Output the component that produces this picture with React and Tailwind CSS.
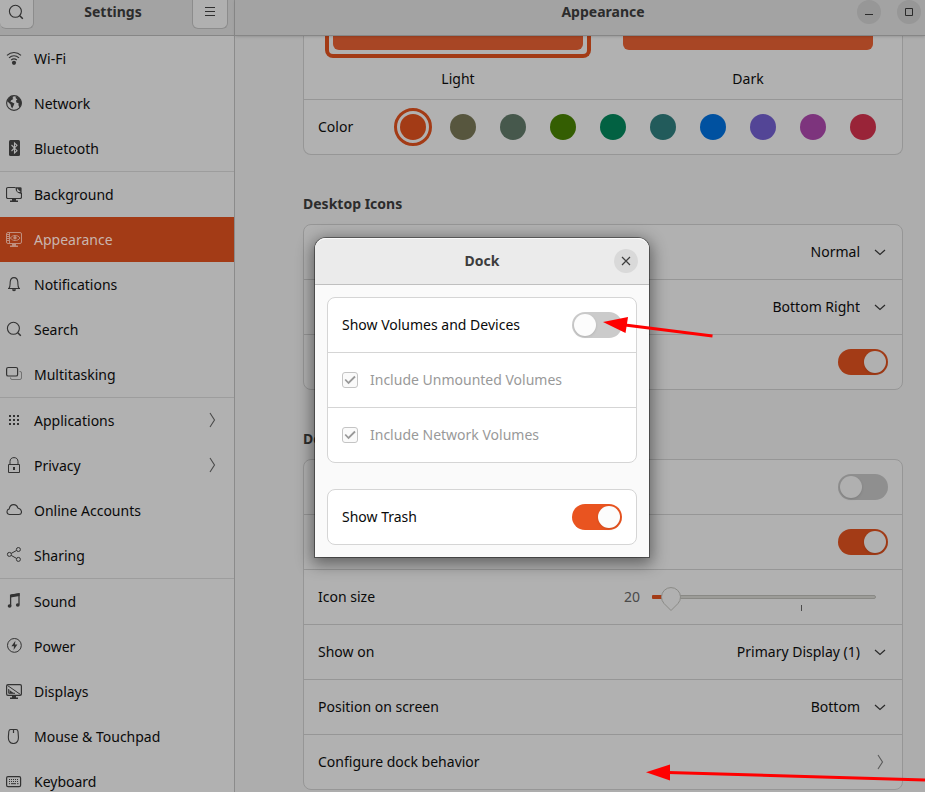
import React from "react";

const Svg = ({ children, className = "" }) => (
  <svg
    viewBox="0 0 16 16"
    width="16"
    height="16"
    fill="none"
    stroke="currentColor"
    aria-hidden="true"
    className={"shrink-0 " + className}
  >
    {children}
  </svg>
);

const icons = {
  wifi: (
    <Svg>
      <path d="M1 5.4C5 1.5 11 1.5 15 5.4" strokeWidth="1.2" />
      <path d="M3 7.9C6 5.2 10 5.2 13 7.9" strokeWidth="1.2" />
      <path d="M5.2 10C7 8.6 9 8.6 10.8 10" strokeWidth="1.2" />
      <circle cx="8" cy="12.8" r="2.1" fill="currentColor" stroke="none" />
    </Svg>
  ),
  network: (
    <Svg>
      <circle cx="8" cy="8" r="7.4" strokeWidth="1.1" />
      <path d="M1 6 3.2 2.8 6 1.1 7.6 1.6 6.4 3 7.4 4 5.2 5.2 4.4 6.4 6 7.2 8.4 8.4 7.6 10.6 6.2 13.4 5 11.6 4.6 9.4 2.6 7.6Z" fill="currentColor" stroke="none" />
      <path d="M10 1.2 13.4 3.2 15.4 6.6 15.2 10 13.4 12.6 12.4 10 12.6 8.2 10.4 7.6 10 5.6 11.4 4.4 9.6 3Z" fill="currentColor" stroke="none" />
    </Svg>
  ),
  bluetooth: (
    <Svg>
      <rect x="3" y="0" width="11" height="16" rx="1.5" fill="currentColor" stroke="none" />
      <path d="M5.5 5 11 10.7 8.5 13V3L11 5.3 5.5 11" stroke="#b1b1b1" strokeWidth="1.1" />
    </Svg>
  ),
  background: (
    <Svg>
      <path d="M9.5 1.5H2A1.5 1.5 0 0 0 .5 3v8A1.5 1.5 0 0 0 2 12.5h12a1.5 1.5 0 0 0 1.5-1.5V7" strokeWidth="1.2" />
      <path d="M9.5 1.2H14A1.5 1.5 0 0 1 15.6 3v5C13 7.6 11.4 6.5 10.6 5.6 9.8 4.4 9.6 3 9.5 1.2Z" fill="currentColor" stroke="none" />
      <path d="M11 2.2 14.6 6H12.5A1.5 1.5 0 0 1 11 4.6Z" fill="#b1b1b1" stroke="none" />
      <path d="M6 13h4v1.5h2V16H4v-1.5h2Z" fill="currentColor" stroke="none" />
    </Svg>
  ),
  appearance: (
    <Svg>
      <rect x=".5" y="1.5" width="15" height="11" rx="1.5" />
      <path d="M3.5 1.5v11M1 3.5h2.5M1 5.5h2.5M1 7.5h2.5M1 9.5h2.5" />
      <path d="M4.4 7C6.6 3.6 11.8 3.6 14 7 11.8 10.4 6.6 10.4 4.4 7Z" />
      <circle cx="9" cy="6.8" r="1.7" fill="currentColor" stroke="none" />
      <path d="M6 13h4v1.5h2V16H4v-1.5h2Z" fill="currentColor" stroke="none" />
    </Svg>
  ),
  bell: (
    <Svg>
      <path d="M2 12.5H14M3 12.3C4.4 10.6 4 8.4 4.2 6 4.4 3.2 6 1.6 8 1.6S11.6 3.2 11.8 6C12 8.4 11.6 10.6 13 12.3" strokeWidth="1.1" />
      <path d="M6 13.2h4A2 2 0 0 1 6 13.2Z" fill="currentColor" stroke="none" />
    </Svg>
  ),
  search: (
    <Svg>
      <circle cx="7.4" cy="7.3" r="6" strokeWidth="1.1" />
      <path d="M11.8 11.8 14.8 14.8" strokeWidth="1.5" />
    </Svg>
  ),
  multitasking: (
    <Svg>
      <rect x=".6" y="1.5" width="11" height="8.5" rx="1.6" strokeWidth="1.2" />
      <path d="M13.5 5.5h.6A1.4 1.4 0 0 1 15.5 7v5A1.6 1.6 0 0 1 14 13.5H6A1.5 1.5 0 0 1 4.5 12v-.5" opacity=".5" />
    </Svg>
  ),
  apps: (
    <Svg>
      <path d="M3 4h10M3 8h10M3 12h10" strokeWidth="2" strokeDasharray="2 2" />
    </Svg>
  ),
  lock: (
    <Svg>
      <path d="M2.5 7.5h11v8h-11ZM4 7.5V4.6C4 2 5.6.6 8 .6s4 1.4 4 4v2.9" />
      <path d="M7 10h2v3H7Z" fill="currentColor" stroke="none" />
    </Svg>
  ),
  cloud: (
    <Svg>
      <path d="M3.3 12.5A2.8 2.8 0 0 1 3.2 7C3.6 4.2 5.4 2.6 7.7 2.6c2.1 0 3.5 1.2 4.1 3.3C14 6.6 15.5 8 15.5 10c0 1.6-1.2 2.5-2.6 2.5Z" strokeWidth="1.1" />
    </Svg>
  ),
  share: (
    <Svg>
      <circle cx="3.4" cy="7.4" r="2" />
      <circle cx="12.4" cy="2.5" r="2" />
      <circle cx="12.4" cy="12.4" r="2" />
      <path d="M5.2 6.4 10.5 3.5M5.2 8.4l5.3 3" />
    </Svg>
  ),
  sound: (
    <Svg>
      <path d="M4.6 13V2.4L13 1v10.4" strokeWidth="1.3" />
      <path d="M4.6 1.6 13.6 0v3L4.6 4.4Z" fill="currentColor" stroke="none" />
      <ellipse cx="3.6" cy="13" rx="1.9" ry="1.8" fill="currentColor" stroke="none" />
      <ellipse cx="11.8" cy="12" rx="1.9" ry="1.8" fill="currentColor" stroke="none" />
    </Svg>
  ),
  power: (
    <Svg>
      <circle cx="8.4" cy="7.4" r="6.9" />
      <path d="M9.4 2.8 5.4 8.2H8L7.6 12 11.4 6.6H8.9Z" fill="currentColor" stroke="none" />
    </Svg>
  ),
  displays: (
    <Svg>
      <rect x=".6" y="1.6" width="14.8" height="10.8" rx="1.4" strokeWidth="1.2" />
      <path d="M1.5 2.5 14.5 11.5M2.7 6v4.3H9" />
      <path d="M3.5 7v3h4Z" fill="currentColor" stroke="none" />
      <path d="M6 12.5h4v2h2V16H4v-1.5h2Z" fill="currentColor" stroke="none" />
    </Svg>
  ),
  mouse: (
    <Svg>
      <path d="M4.6 1.5h5.6c1.1 0 1.6.7 1.8 2l.4 5.1c.3 4.2-1.6 6.9-5 6.9s-5.3-2.7-5-6.9l.4-5.1c.2-1.3.7-2 1.8-2Z" strokeWidth="1.1" />
      <path d="M7.5 1v4" strokeWidth="1.2" />
    </Svg>
  ),
  keyboard: (
    <Svg>
      <rect x=".6" y="3.6" width="14" height="10" rx="1.4" strokeWidth="1.2" />
      <path d="M3 6.5h9.5M3 8.5h9.5" strokeDasharray="1 1" />
      <path d="M3 10.7h1M5 10.7h5M11 10.7h1.5" />
    </Svg>
  ),
};

const navGroups = [
  [
    ["Wi-Fi", "wifi"],
    ["Network", "network"],
    ["Bluetooth", "bluetooth"],
  ],
  [
    ["Background", "background"],
    ["Appearance", "appearance"],
    ["Notifications", "bell"],
    ["Search", "search"],
    ["Multitasking", "multitasking"],
  ],
  [
    ["Applications", "apps", true],
    ["Privacy", "lock", true],
    ["Online Accounts", "cloud"],
    ["Sharing", "share"],
  ],
  [
    ["Sound", "sound"],
    ["Power", "power"],
    ["Displays", "displays"],
    ["Mouse & Touchpad", "mouse"],
    ["Keyboard", "keyboard"],
  ],
];

const colors = [
  ["Orange", "bg-[#a33b16]"],
  ["Bark", "bg-[#57563e]"],
  ["Sage", "bg-[#46584c]"],
  ["Olive", "bg-[#345e02]"],
  ["Viridian", "bg-[#026142]"],
  ["Prussian Green", "bg-[#225b5b]"],
  ["Blue", "bg-[#0051a0]"],
  ["Purple", "bg-[#534596]"],
  ["Magenta", "bg-[#7d347d]"],
  ["Red", "bg-[#992438]"],
];

const ChevronRight = () => (
  <svg viewBox="0 0 8 16" width="8" height="16" fill="none" stroke="currentColor" aria-hidden="true" className="shrink-0">
    <path d="M2 1 6.5 8 2 15" strokeWidth="1.1" />
  </svg>
);

function Switch({ label, on, dim }) {
  const tone = dim
    ? "bg-[#8f8f8f] checked:bg-[#a33b16] before:bg-[#b0b0b0]"
    : "bg-[#cbcbcb] checked:bg-[#e95420] before:bg-[#fcfcfc]";
  return (
    <input
      type="checkbox"
      role="switch"
      aria-label={label}
      defaultChecked={on}
      className={
        "h-[26px] w-[50px] shrink-0 appearance-none rounded-full p-[2px] before:block before:size-[22px] before:rounded-full before:shadow-sm checked:pl-[26px] " +
        tone
      }
    />
  );
}

function Select({ label, value }) {
  return (
    <div className="grid items-center">
      <select
        aria-label={label}
        defaultValue={value}
        className="col-start-1 row-start-1 appearance-none bg-transparent pr-7 outline-none [text-align-last:right]"
      >
        <option>{value}</option>
      </select>
      <svg viewBox="0 0 12 8" width="12" height="8" fill="none" stroke="currentColor" aria-hidden="true" className="pointer-events-none col-start-1 row-start-1 mr-[2px] justify-self-end text-[#2a2a2a]">
        <path d="M1 2 6 6.5 11 2" strokeWidth="1.2" />
      </svg>
    </div>
  );
}

const Row = ({ label, children }) => (
  <div className="flex h-[55px] items-center justify-between border-b border-[#969696] pr-[14px] pl-[14px] last:h-[54px] last:border-b-0">
    <span>{label}</span>
    {children}
  </div>
);

const Card = ({ children }) => (
  <div className="rounded-lg border border-[#969696] bg-[#b1b1b1]">{children}</div>
);

function Sidebar() {
  return (
    <aside className="flex w-[235px] shrink-0 flex-col border-r border-[#8b8b8b] bg-[#b1b1b1]">
      <header className="flex h-9 shrink-0 items-start border-b border-[#868686] bg-[#a3a3a3]">
        <button aria-label="Search" className="flex h-[29px] w-[34px] items-center justify-center rounded-b-md border border-t-0 border-l-0 border-[#8c8c8c] bg-[#b0b0b0] pr-[2px] pb-1 text-[#2f2f2f]">
          {icons.search}
        </button>
        <h1 className="flex-1 pt-[2px] text-center font-bold text-[#2c2c2c]">Settings</h1>
        <button aria-label="Menu" className="mr-[6px] flex h-[29px] w-9 items-center justify-center rounded-b-md border border-t-0 border-[#8c8c8c] bg-[#b0b0b0] pb-1 text-[#2f2f2f]">
          <svg viewBox="0 0 10 10" width="10" height="10" stroke="currentColor" aria-hidden="true">
            <path d="M0 .5h10M0 4.5h10M0 8.5h10" />
          </svg>
        </button>
      </header>
      <nav aria-label="Settings">
        {navGroups.map((group, i) => (
          <ul key={i} className="border-b border-[#9d9d9d] last:border-b-0">
            {group.map(([name, icon, more]) => {
              const active = name === "Appearance";
              return (
                <li key={name}>
                  <a
                    href="#"
                    aria-current={active ? "page" : undefined}
                    className={
                      "flex h-[45px] items-center gap-3 pr-[18px] pb-px pl-[6px] " +
                      (active ? "bg-[#a33b16] text-[#c9b5ae]" : "")
                    }
                  >
                    <span className={active ? "text-[#c08f7e]" : "text-[#333333]"}>{icons[icon]}</span>
                    <span className="flex-1 pt-[2px]">{name}</span>
                    {more && (
                      <span className="text-[#4a4a4a]">
                        <ChevronRight />
                      </span>
                    )}
                  </a>
                </li>
              );
            })}
          </ul>
        ))}
      </nav>
    </aside>
  );
}

function IconSize() {
  return (
    <div className="flex items-center gap-3 pr-3">
      <span className="text-[#4a4a4a]">20</span>
      <div className="grid">
        <svg viewBox="0 0 224 28" width="224" height="28" aria-hidden="true" className="col-start-1 row-start-1">
          <rect x=".5" y="12.5" width="223" height="3" rx="1.5" fill="#9c9c98" stroke="#898985" />
          <rect x="0" y="12" width="20" height="4" rx="1" fill="#a33b16" />
          <path d="M149.5 22v7" stroke="#4a4a4a" />
          <path d="M12 20.5A9.5 9.5 0 1 1 26 20.5L19 27.5Z" fill="#b1b1b1" stroke="#8a8a86" />
        </svg>
        <input type="range" aria-label="Icon size" min="16" max="64" defaultValue="20" className="col-start-1 row-start-1 w-full opacity-0" />
      </div>
    </div>
  );
}

function Main() {
  return (
    <main className="flex min-w-0 flex-1 flex-col bg-[#adadad]">
      <header className="z-10 grid h-9 shrink-0 border-b border-[#868686] bg-[#a3a3a3] shadow-sm">
        <h2 className="col-start-1 row-start-1 pt-[2px] pr-[22px] pl-[68px] text-center font-bold text-[#2c2c2c]">Appearance</h2>
        <div className="col-start-1 row-start-1 flex gap-4 justify-self-end pr-1 text-[#2a2a2a]">
          <button aria-label="Minimize" className="flex size-6 items-center justify-center rounded-full bg-[#979797]">
            <svg viewBox="0 0 8 8" width="8" height="8" stroke="currentColor" aria-hidden="true"><path d="M0 6.5h8" /></svg>
          </button>
          <button aria-label="Maximize" className="flex size-6 items-center justify-center rounded-full bg-[#979797]">
            <svg viewBox="0 0 8 8" width="8" height="8" fill="none" stroke="currentColor" aria-hidden="true"><path d="M.5.5h7v7h-7Z" /></svg>
          </button>
        </div>
      </header>
      <div className="flex flex-col pr-[22px] pl-[68px]">
        <section aria-label="Style" className="rounded-b-lg border border-t-0 border-[#969696] bg-[#b1b1b1]">
          <div className="flex justify-between border-b border-[#969696] pr-[29px] pl-[21px]">
            <button className="flex h-[63px] w-[266px] flex-col items-center">
              <span className="block h-[22px] w-full rounded-b-lg border-4 border-t-0 border-[#a33b16] px-1 pb-1">
                <span className="block h-[14px] rounded-b-md bg-[#a84625]" />
              </span>
              <span className="pt-[11px]">Light</span>
            </button>
            <button className="flex h-[63px] w-[250px] flex-col items-center">
              <span className="block h-[14px] w-full rounded-b-md bg-[#a84625]" />
              <span className="pt-[19px]">Dark</span>
            </button>
          </div>
          <fieldset className="flex h-[54px] items-center justify-between pr-[26px] pl-[14px]">
            <span>Color</span>
            <div className="flex gap-6">
              {colors.map(([name, bg], i) => (
                <input
                  key={name}
                  type="radio"
                  name="accent"
                  aria-label={name}
                  defaultChecked={i === 0}
                  className={"size-[26px] appearance-none rounded-full checked:outline-3 checked:outline-offset-3 checked:outline-[#a33b16] " + bg}
                />
              ))}
            </div>
          </fieldset>
        </section>

        <h3 className="mt-[39px] mb-[10px] font-bold text-[#2c2c2c]">Desktop Icons</h3>
        <Card>
          <Row label="Size"><Select label="Size" value="Normal" /></Row>
          <Row label=""><Select label="Position of New Icons" value="Bottom Right" /></Row>
          <Row label=""><Switch label="Show Personal folder" on dim /></Row>
        </Card>

        <h3 className="mt-[39px] mb-[10px] font-bold text-[#2c2c2c]">Dock</h3>
        <Card>
          <Row label=""><Switch label="Auto-hide the Dock" dim /></Row>
          <Row label=""><Switch label="Panel mode" on dim /></Row>
          <Row label="Icon size"><IconSize /></Row>
          <Row label="Show on"><Select label="Show on" value="Primary Display (1)" /></Row>
          <Row label="Position on screen"><Select label="Position on screen" value="Bottom" /></Row>
          <Row label="Configure dock behavior">
            <button aria-label="Configure dock behavior" className="pr-1 text-[#5a5a5a]"><ChevronRight /></button>
          </Row>
        </Card>
      </div>
    </main>
  );
}

function CheckRow({ label }) {
  return (
    <label className="flex h-[55px] items-center gap-3 border-b border-[#d5d5d5] px-[14px] text-[#999999] last:h-[54px] last:border-b-0">
      <span className="grid">
        <input type="checkbox" defaultChecked disabled className="col-start-1 row-start-1 size-4 appearance-none rounded-[3px] border border-[#c4c4c4] bg-[#fafafa]" />
        <svg viewBox="0 0 16 16" width="16" height="16" fill="none" stroke="currentColor" aria-hidden="true" className="pointer-events-none col-start-1 row-start-1">
          <path d="M3.2 7.5 6.5 11 13 4.5" strokeWidth="1.8" />
        </svg>
      </span>
      {label}
    </label>
  );
}

function DockDialog() {
  return (
    <div role="dialog" aria-labelledby="dock-title" className="absolute top-[238px] left-[315px] z-20 w-[334px] rounded-t-[11px] bg-[#fafafa] shadow-[0_0_0_1px_rgba(0,0,0,0.4),0_4px_16px_3px_rgba(0,0,0,0.45)]">
      <header className="grid h-[47px] items-center rounded-t-[11px] border-t border-b border-t-[#fafafa] border-b-[#bfbfbf] bg-[#ebebeb] pb-px">
        <h2 id="dock-title" className="col-start-1 row-start-1 text-center font-bold text-[#3d3d3d]">Dock</h2>
        <button aria-label="Close" className="col-start-1 row-start-1 mr-[11px] flex size-6 items-center justify-center justify-self-end rounded-full bg-[#d9d9d9] text-[#3d3d3d]">
          <svg viewBox="0 0 10 10" width="10" height="10" stroke="currentColor" aria-hidden="true">
            <path d="m1 1 8 8M9 1 1 9" strokeWidth="1.2" />
          </svg>
        </button>
      </header>
      <div className="flex flex-col gap-[26px] p-3">
        <div className="rounded-lg border border-[#d5d5d5] bg-white">
          <div className="flex h-[55px] items-center justify-between border-b border-[#d5d5d5] px-[14px]">
            <span>Show Volumes and Devices</span>
            <Switch label="Show Volumes and Devices" />
          </div>
          <CheckRow label="Include Unmounted Volumes" />
          <CheckRow label="Include Network Volumes" />
        </div>
        <div className="flex h-14 items-center justify-between rounded-lg border border-[#d5d5d5] bg-white px-[14px]">
          <span>Show Trash</span>
          <Switch label="Show Trash" on />
        </div>
      </div>
    </div>
  );
}

const Arrows = () => (
  <svg viewBox="0 0 925 792" width="925" height="792" aria-hidden="true" className="pointer-events-none absolute top-0 left-0 z-30">
    <g fill="#ff0000" stroke="#ff0000">
      <path d="M625 325 712.5 336" strokeWidth="3" />
      <path d="M603 322 628 317 625.5 333Z" stroke="none" />
      <path d="M668 772.5 925 780" strokeWidth="3" />
      <path d="M646 772.2 670 764.5V780.5Z" stroke="none" />
    </g>
  </svg>
);

export default function App() {
  return (
    <div className="relative flex h-screen overflow-hidden font-['Noto_Sans',sans-serif] text-sm text-[#0a0a0a]">
      <Sidebar />
      <Main />
      <DockDialog />
      <Arrows />
    </div>
  );
}
